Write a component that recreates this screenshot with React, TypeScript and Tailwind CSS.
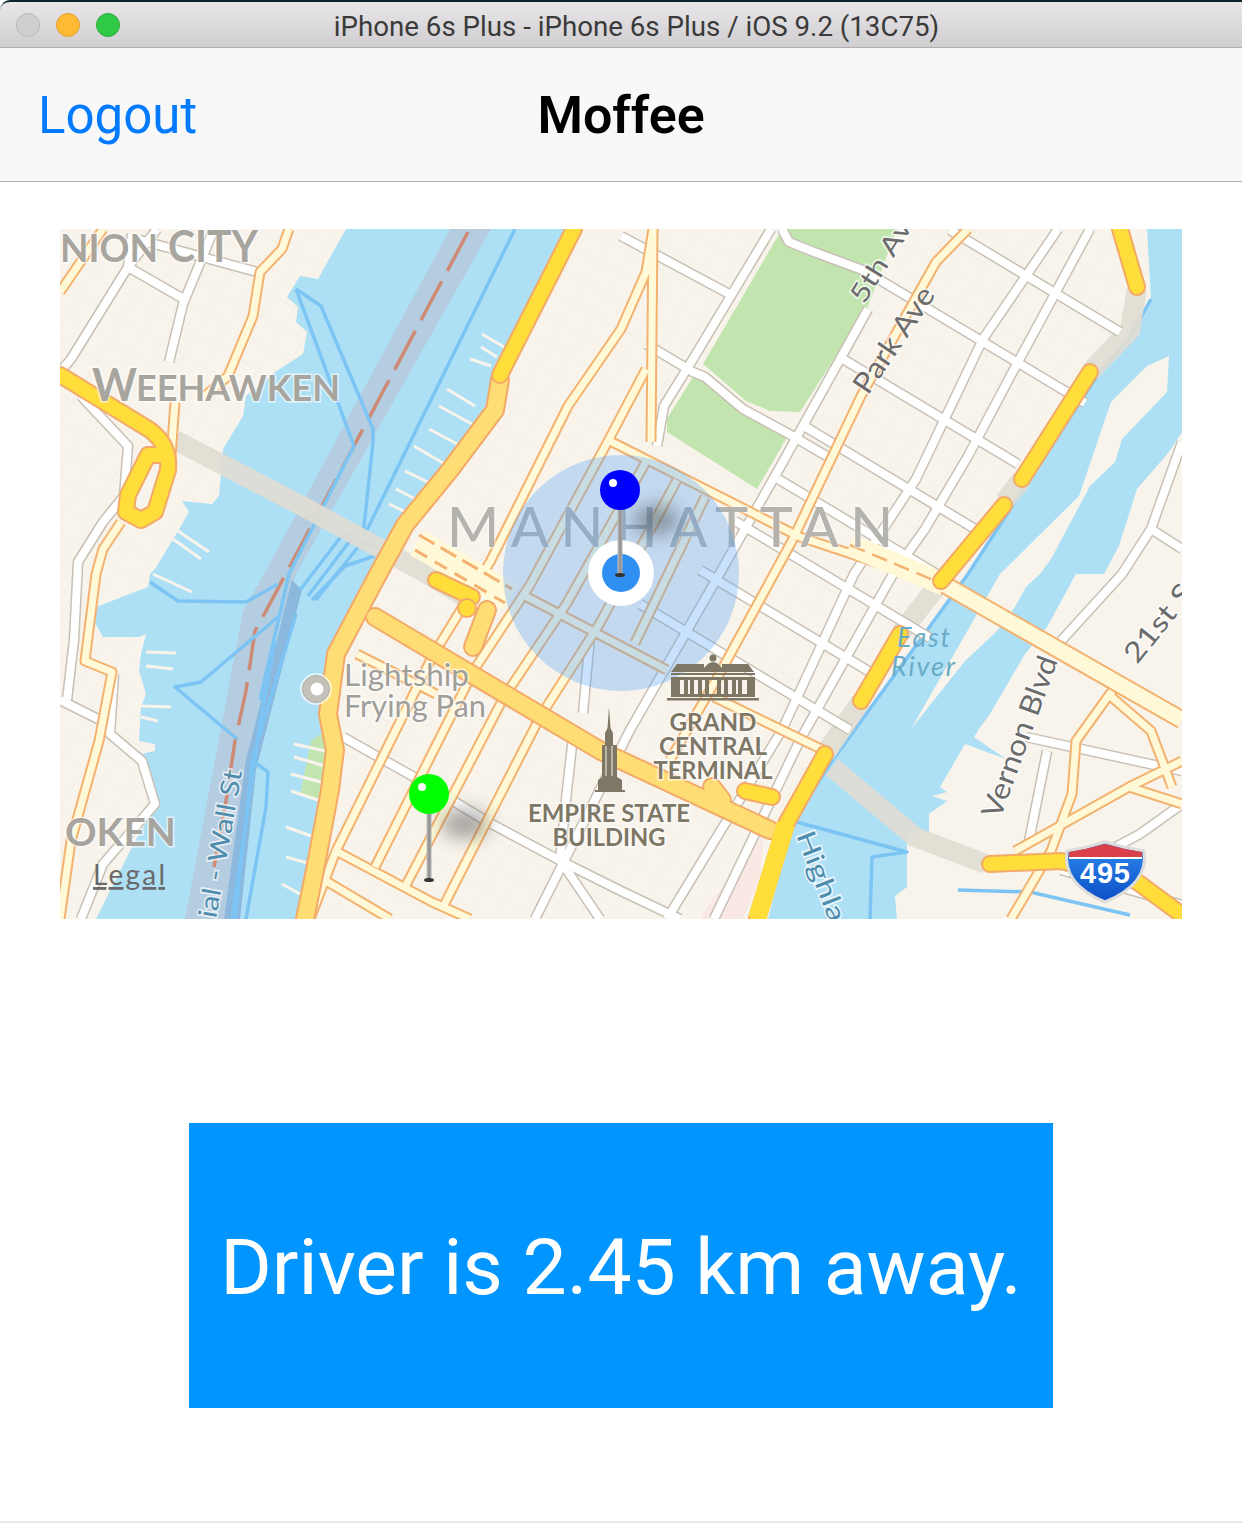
const LAND = '#f8f4ec'
const WATER = '#aee0f5'

const whiteRoads = [
  '868,309 779,469 720,573 630,730 535,919',
  '771,229 693,359 664,406 657,446',
  '1058,229 983,339 916,479 854,574 814,661 782,730 667,919',
  '1090,229 1018,362 968,456 925,529 893,574 800,740 714,919',
  '950,230 1120,332',
  '870,274 1085,403',
  '843,359 1018,464',
  '804,426 985,535',
  '778,479 950,582',
  '735,521 930,638',
  '700,570 880,678',
  '640,604 850,730',
  '621,236 733,296',
  '646,344 693,372 705,377 743,409 789,434 830,458',
  '782,229 789,242 814,252 868,272',
  '573,737 567,790 560,860',
  '590,637 583,713',
  '343,737 414,777 486,821 561,861 621,891 680,919',
  '157,229 128,267 71,359 60,372',
  '214,229 183,304 169,362',
  '132,234 128,267 187,301',
  '140,240 257,272',
  '81,396 128,446 124,496 103,522 78,562 74,640 67,700',
  '114,674 110,734 142,761 155,804 103,864 81,919',
  '60,700 100,720',
  '1182,442 1151,529 1122,574 1061,641',
  '1151,529 1182,549',
  '1026,737 1182,771',
  '1047,751 1029,841',
  '1182,804 1140,834 1110,850',
  '1061,870 1182,905',
  '560,860 600,919',
]

const creamRoads = [
  '289,229 282,249 260,272 253,316 228,376 205,396',
  '103,229 60,292',
  '175,402 170,470',
  '121,522 103,549 96,574 85,661 112,672 99,741 71,841 60,919',
  '336,851 432,657 490,562 568,406 621,329 646,272 653,229',
  '653,229 651,442',
  '375,867 474,670 530,585 607,443 646,369',
  '405,887 504,697 567,603 647,460',
  '443,907 540,717 600,623 677,480',
  '310,919 336,851',
  '635,643 705,497',
  '793,539 861,396 936,262 968,229',
  '793,539 720,673 670,760',
  '608,440 800,537 945,585',
  '523,595 667,670',
  '357,654 436,694',
  '336,851 432,902 470,919',
  '316,875 390,919',
  '714,697 825,751',
  '1122,677 1076,741 1072,794 1051,851 1011,919',
  '1015,851 1129,787 1182,761',
  '1129,787 1182,804',
  '1108,694 1151,731 1172,787',
]

const blueLines = [
  '515,229 364,536',
  '296,289 321,306 373,429 373,442 363,536',
  '296,289 354,446 289,574 260,700',
  '150,582 178,601 246,602 278,584',
  '278,617 201,682 175,687 237,739',
  '296,614 253,757 235,919',
  '275,641 260,724 232,919',
  '253,761 268,772 266,807 246,919',
  '1151,299 1129,339 1097,376 968,574 832,761 793,821 907,852 872,857 870,919',
  '958,890 1030,892 1130,915',
  '343,534 300,590',
  '352,538 308,596',
  '362,542 316,600',
  '345,534 386,552 345,566 312,600',
]

const piers = [
  '482,334 504,347', '481,347 497,357', '470,359 491,366', '447,389 475,406',
  '439,406 472,424', '429,429 461,446', '414,446 448,466', '405,471 438,487',
  '396,489 425,504', '389,504 414,516', '178,531 209,552', '173,539 201,559',
  '153,574 192,592', '146,652 176,653', '146,666 173,669', '141,706 171,707',
  '141,717 158,721', '286,827 314,837', '286,857 311,864', '282,884 300,894',
]

const yellowHighways = [
  'M60,375 L150,430 Q170,445 168,470 L155,512 L141,520 L126,512 L128,495 L148,455 L165,455',
  'M574,229 L500,375',
  'M1120,229 L1137,287',
  'M1090,372 L1022,479',
  'M1004,505 L941,581',
  'M900,634 L861,701',
  'M825,754 L786,824 L757,919',
  'M436,580 L472,597',
  'M990,864 L1061,861 L1136,881 L1182,915',
  'M745,791 L772,797',
]

const paleHighways = [
  'M500,380 L495,410 L450,470 L405,525 L375,580 L336,654 L328,714 L335,750 L330,790 L315,870 L305,919',
  'M375,617 L601,751 L770,830',
  'M487,610 L473,647',
  'M712,787 L722,800',
]

const greyBands = [
  'M175,440 L300,505 L420,570 L470,600',
  'M1137,289 L1130,330 L1090,372',
  'M1022,479 L1004,502',
  'M941,581 L900,634',
  'M861,701 L825,754',
  'M832,767 L915,837 L986,864',
]

function Roads({ list, casing, fill, outer, inner }: { list: string[]; casing: string; fill: string; outer: number; inner: number }) {
  return (
    <g fill="none" strokeLinejoin="round">
      {list.map((pts) => (
        <polyline key={pts} points={pts} stroke={casing} strokeWidth={outer} />
      ))}
      {list.map((pts) => (
        <polyline key={pts} points={pts} stroke={fill} strokeWidth={inner} />
      ))}
    </g>
  )
}

function Highways({ list, fill, outer, inner }: { list: string[]; fill: string; outer: number; inner: number }) {
  return (
    <g fill="none" strokeLinejoin="round" strokeLinecap="round">
      {list.map((d) => (
        <path key={d} d={d} stroke="#f3a968" strokeWidth={outer} />
      ))}
      {list.map((d) => (
        <path key={d} d={d} stroke={fill} strokeWidth={inner} />
      ))}
    </g>
  )
}

function Pin({ cx, cy, bottom, color }: { cx: number; cy: number; bottom: number; color: string }) {
  return (
    <g>
      <ellipse cx={cx + 36} cy={cy + 30} rx="24" ry="15" fill="#333" opacity="0.4" filter="url(#soft)" />
      <rect x={cx - 2.5} y={cy + 18} width="5" height={bottom - cy - 18} fill="url(#stick)" />
      <ellipse cx={cx} cy={bottom} rx="5" ry="2" fill="#333" />
      <circle cx={cx} cy={cy} r="20" fill={color} />
      <circle cx={cx - 7} cy={cy - 7} r="4" fill="#fff" />
    </g>
  )
}

function Label({ x, y, size, width, color, anchor, children }: { x: number; y: number; size: number; width: number; color: string; anchor?: 'middle'; children: string }) {
  return (
    <text
      x={x}
      y={y}
      fontSize={size}
      fill={color}
      textLength={width}
      lengthAdjust="spacingAndGlyphs"
      textAnchor={anchor}
      stroke="#fff"
      strokeOpacity="0.65"
      strokeWidth="3"
      paintOrder="stroke"
    >
      {children}
    </text>
  )
}

function TiltLabel({ x, y, angle, size, width, color, children }: { x: number; y: number; angle: number; size: number; width: number; color: string; children: string }) {
  return (
    <text
      transform={`translate(${x} ${y}) rotate(${angle})`}
      fontSize={size}
      fill={color}
      textLength={width}
      lengthAdjust="spacingAndGlyphs"
      stroke="#fff"
      strokeOpacity="0.7"
      strokeWidth="3"
      paintOrder="stroke"
    >
      {children}
    </text>
  )
}

function MapView() {
  return (
    <svg viewBox="60 229 1122 690" className="block w-full h-full font-['Lato',sans-serif]">
      <defs>
        <pattern id="blocks" width="24" height="24" patternUnits="userSpaceOnUse" patternTransform="rotate(-60)">
          <path d="M0,0 H24 M0,0 V24" fill="none" stroke="#f1ebdf" strokeWidth="1" />
        </pattern>
        <filter id="soft" x="-80%" y="-80%" width="260%" height="260%">
          <feGaussianBlur stdDeviation="9" />
        </filter>
        <linearGradient id="stick" x1="0" x2="1" y1="0" y2="0">
          <stop offset="0" stopColor="#c4c4c4" />
          <stop offset="0.5" stopColor="#8e8e8e" />
          <stop offset="1" stopColor="#b4b4b4" />
        </linearGradient>
        <linearGradient id="shield" x1="0" x2="0" y1="0" y2="1">
          <stop offset="0" stopColor="#2f8cf0" />
          <stop offset="1" stopColor="#0b4ec6" />
        </linearGradient>
      </defs>

      <rect x="60" y="229" width="1122" height="690" fill={LAND} />
      <rect x="60" y="229" width="1122" height="690" fill="url(#blocks)" />

      <polygon
        fill={WATER}
        points="346,229 318,279 300,276 287,297 298,307 296,322 307,332 303,354 275,372 246,396 243,416 223,449 219,496 212,504 182,501 189,512 175,536 155,569 150,574 148,587 96,607 94,621 103,637 139,637 146,634 141,654 139,671 146,694 141,707 139,741 155,744 155,751 141,754 157,804 135,841 96,919 296,919 300,894 311,874 323,774 327,741 320,714 336,654 375,574 380,572 407,522 450,469 504,406 493,369 568,229"
      />
      <polygon
        fill={WATER}
        points="1147,229 1182,229 1182,919 768,919 793,821 832,761 968,574 1097,376 1129,339 1151,299"
      />
      <polygon
        fill={LAND}
        points="1182,432 1169,452 1137,489 1119,546 1104,574 1076,574 1047,627 1025,654 990,714 979,729 974,737 1006,759 965,744 940,787 947,792 932,796 947,801 929,814 929,832 907,834 907,887 895,896 897,919 1182,919"
      />
      <polygon
        fill={LAND}
        points="1000,574 1079,496 1111,402 1147,366 1169,356 1167,392 1122,439 1115,462 1090,486 1051,559 1040,574 1026,587 1015,607 997,631 965,661 911,729"
      />
      <polygon fill="#f9e8e3" points="707,907 764,834 761,874 743,919 700,919" />

      <polygon fill="#c2e5b0" points="789,229 897,229 868,306 800,412 770,411 746,401 703,364 778,236" />
      <polygon fill="#c2e5b0" points="693,377 705,377 743,409 789,434 757,489 667,432 667,419" />
      <polygon fill="#c2e5b0" points="311,741 325,731 327,800 300,795" />
      <g fill="none" stroke={LAND} strokeWidth="3">
        <path d="M294,744 L325,751 M294,757 L325,766 M291,774 L321,782 M291,791 L321,801" />
        {piers.map((pts) => (
          <polyline key={pts} points={pts} />
        ))}
      </g>

      <polygon fill="#b5cde0" points="450,229 491,229 296,574 275,641 232,919 185,919 243,611 264,574" />
      <polygon fill="#8cb8de" points="292,580 302,590 256,770 240,919 224,919 246,760" />
      <polyline
        points="468,232 266,611 255,631 246,691 235,741 226,801 214,867"
        fill="none"
        stroke="#cd8a75"
        strokeWidth="3.5"
        strokeDasharray="44 12"
      />
      <g fill="none" stroke="#7cc4f3" strokeWidth="3.5" strokeLinejoin="round">
        {blueLines.map((pts) => (
          <polyline key={pts} points={pts} />
        ))}
      </g>

      <g fill="none" strokeLinecap="butt">
        {greyBands.map((d) => (
          <path key={d} d={d} stroke="#dfdcd3" strokeWidth="20" opacity="0.92" />
        ))}
      </g>

      <Roads list={whiteRoads} casing="#c8c0b4" fill="#fff" outer={11} inner={8} />
      <Roads list={creamRoads} casing="#f3b26f" fill="#fff9d8" outer={11} inner={7} />

      <polyline points="417,543 510,597" fill="none" stroke="#fff9d8" strokeWidth="28" />
      <polyline points="419,535 512,589" fill="none" stroke="#f3b26f" strokeWidth="3" strokeDasharray="18 7" />
      <polyline points="415,550 505,603" fill="none" stroke="#f3b26f" strokeWidth="3" strokeDasharray="14 9" />
      <polyline points="850,545 945,585" fill="none" stroke="#fff9d8" strokeWidth="22" />
      <polyline points="850,545 945,585" fill="none" stroke="#f3b26f" strokeWidth="2.5" strokeDasharray="16 8" />
      <polyline points="945,585 1182,720" fill="none" stroke="#f3b26f" strokeWidth="19" />
      <polyline points="945,585 1182,720" fill="none" stroke="#fff9d8" strokeWidth="15" />

      <Highways list={paleHighways} fill="#ffdd75" outer={20} inner={16} />
      <Highways list={yellowHighways} fill="#ffdd3a" outer={18} inner={14} />
      <circle cx="467" cy="608" r="9" fill="#ffdd3a" stroke="#f3a968" strokeWidth="2" />
      <polyline points="786,824 757,919" fill="none" stroke="#ffdd3a" strokeWidth="18" />

      <g fontWeight="700">
        <Label x={60} y={262} size={38} width={98} color="#a8a59f">NION</Label>
        <Label x={168} y={262} size={44} width={90} color="#a8a59f">CITY</Label>
        <Label x={92} y={401} size={46} width={45} color="#a8a59f">W</Label>
        <Label x={136} y={401} size={37} width={204} color="#a8a59f">EEHAWKEN</Label>
        <Label x={65} y={846} size={38} width={111} color="#a8a59f">OKEN</Label>
      </g>
      <text x="447" y="547" fontSize="56" fill="#b4b3ae" textLength="446" fontWeight="500" stroke="#fff" strokeOpacity="0.35" strokeWidth="3" paintOrder="stroke">
        MANHATTAN
      </text>

      <circle cx="621" cy="573" r="118" fill="#58a4f8" opacity="0.33" />

      <g>
        <Label x={344} y={686} size={30} width={125} color="#a09e99">Lightship</Label>
        <Label x={344} y={717} size={30} width={142} color="#a09e99">Frying Pan</Label>
      </g>
      <circle cx="316" cy="689" r="16" fill="#fff" opacity="0.6" />
      <circle cx="316" cy="689" r="13.5" fill="#c4c1bb" stroke="#b0ada8" strokeWidth="1" />
      <circle cx="317" cy="689" r="6.5" fill="#fff" />

      <text x="93" y="885" fontSize="28" fill="#6a6a6a" textLength="72" textDecoration="underline">
        Legal
      </text>

      <TiltLabel x={216} y={919} angle={-80} size={26} width={150} color="#4f8dae">ial - Wall St</TiltLabel>
      <TiltLabel x={796} y={835} angle={69} size={26} width={95} color="#4f8dae">Highla</TiltLabel>
      <TiltLabel x={864} y={305} angle={-58} size={26} width={92} color="#6b6b6b">5th Av</TiltLabel>
      <TiltLabel x={868} y={396} angle={-56} size={29} width={122} color="#6b6b6b">Park Ave</TiltLabel>
      <TiltLabel x={1000} y={820} angle={-70} size={29} width={170} color="#6b6b6b">Vernon Blvd</TiltLabel>
      <TiltLabel x={1137} y={665} angle={-51} size={28} width={92} color="#6b6b6b">21st S</TiltLabel>

      <g fontStyle="italic">
        <text x="897" y="647" fontSize="27" fill="#6aacc8" textLength="53">East</text>
        <text x="891" y="676" fontSize="27" fill="#6aacc8" textLength="64">River</text>
      </g>

      <g fontWeight="700">
        <Label x={713} y={731} size={25} width={87} color="#7e7765" anchor="middle">GRAND</Label>
        <Label x={713} y={755} size={25} width={108} color="#7e7765" anchor="middle">CENTRAL</Label>
        <Label x={713} y={779} size={25} width={119} color="#7e7765" anchor="middle">TERMINAL</Label>
        <Label x={609} y={822} size={25} width={162} color="#7e7765" anchor="middle">EMPIRE STATE</Label>
        <Label x={609} y={846} size={25} width={113} color="#7e7765" anchor="middle">BUILDING</Label>
      </g>

      {/* Empire State Building */}
      <g fill="#7e7765">
        <polygon points="609,707 610.5,728 613,733 613,745 617,745 617,777 622,780 622,790 625,790 625,792 595,792 595,790 598,790 598,780 602,777 602,745 605,745 605,733 607.5,728" />
        <path d="M606,746 V776 M612,746 V776" stroke="#f8f4ec" strokeWidth="1" />
      </g>

      {/* Grand Central */}
      <g fill="#7e7765">
        <circle cx="713" cy="658" r="3.5" />
        <path d="M704,668 Q713,656 722,668 Z" />
        <polygon points="677,664 704,664 704,668 722,668 722,664 748,664 754,672 671,672" />
        <rect x="671" y="673" width="84" height="2" />
        <path d="M671,677 H755 V697 H671 Z M680,680 V694 H684 V680 Z M688,680 V694 H690 V680 Z M694,680 V694 H698 V680 Z M702,680 V694 H705 V680 Z M709,680 V694 H717 V680 Z M721,680 V694 H724 V680 Z M728,680 V694 H732 V680 Z M736,680 V694 H738 V680 Z M742,680 V694 H747 V680 Z" fillRule="evenodd" />
        <rect x="667" y="698" width="92" height="2.5" />
      </g>

      {/* Interstate shield */}
      <g>
        <path
          d="M1067,851 Q1086,848 1105,842 Q1124,848 1144,851 Q1149,884 1105,902 Q1062,884 1067,851 Z"
          fill="url(#shield)"
          stroke="#dcdcdc"
          strokeWidth="3"
        />
        <path d="M1069,852 Q1087,849 1105,844 Q1123,849 1142,852 L1142,857 L1069,857 Z" fill="#d9404a" />
        <rect x="1069" y="857" width="73" height="2" fill="#fff" />
        <text x="1105" y="883" fontSize="29" fontWeight="700" fill="#fff" textAnchor="middle" textLength="50" fontFamily="'Liberation Sans',sans-serif">
          495
        </text>
      </g>

      {/* current location */}
      <circle cx="621" cy="573" r="33" fill="#fff" />
      <circle cx="621" cy="573" r="19" fill="#2f8ff2" />

      <Pin cx={620} cy={490} bottom={575} color="#0000ff" />
      <Pin cx={429} cy={794} bottom={880} color="#00ff00" />
    </svg>
  )
}

export default function App() {
  return (
    <div className="w-[1242px] h-[1526px] overflow-hidden bg-white flex flex-col font-['Roboto',sans-serif]">
      <div className="h-[48px] shrink-0 rounded-tl-[10px] border-t-2 border-t-[#0d2530] border-b border-b-[#b1afb1] bg-gradient-to-b from-[#e8e6e8] to-[#d0ced0] flex items-center relative">
        <div className="flex gap-4 pl-4">
          <span className="w-6 h-6 rounded-full bg-[#cfcfcf] border border-[#b8b8b8]" />
          <span className="w-6 h-6 rounded-full bg-[#ffba35] border border-[#e2a030]" />
          <span className="w-6 h-6 rounded-full bg-[#2fca45] border border-[#28ad3a]" />
        </div>
        <div className="absolute left-[333px] top-[11px] w-[607px] text-center text-[27.7px] leading-none text-[#3a3a3a] whitespace-nowrap">
          iPhone 6s Plus - iPhone 6s Plus / iOS 9.2 (13C75)
        </div>
      </div>

      <div className="h-[134px] shrink-0 bg-[#f8f8f8] border-b border-[#b2b2b2] relative flex items-center justify-center">
        <span className="absolute left-[38px] top-[42px] text-[51px] leading-none text-[#007aff]">Logout</span>
        <span className="pt-0.5 text-[52px] leading-none font-semibold text-black">Moffee</span>
      </div>

      <div className="mt-[47px] mx-[60px] h-[690px] shrink-0 overflow-hidden">
        <MapView />
      </div>

      <div className="mt-[204px] mx-auto w-[864px] h-[285px] shrink-0 bg-[#0095ff] flex items-center justify-center">
        <span className="pt-1 text-[78.7px] leading-none text-white whitespace-nowrap">Driver is 2.45 km away.</span>
      </div>

      <div className="mt-[113px] border-t-2 border-[#e8e8e8]" />
    </div>
  )
}
